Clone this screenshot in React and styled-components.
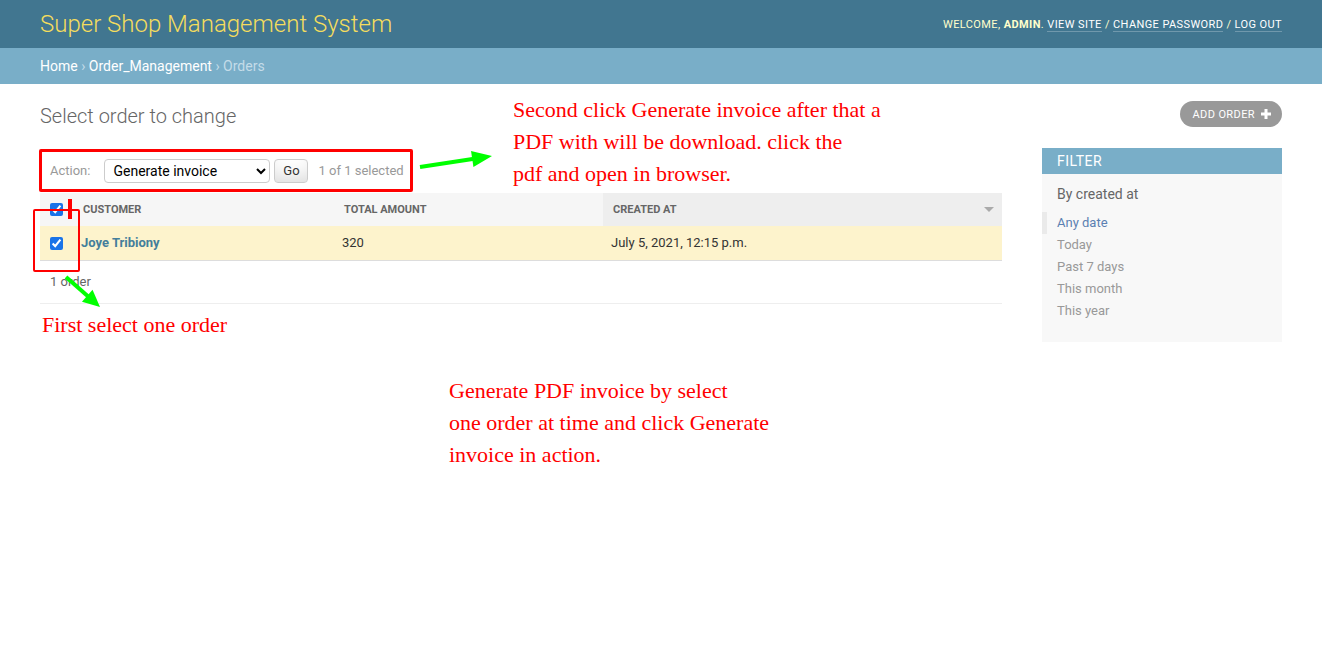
import React from 'react';
import styled, { createGlobalStyle } from 'styled-components';

const GlobalStyle = createGlobalStyle`
	html, body {
		margin: 0;
		padding: 0;
		background: #fff;
	}
	body {
		font-family: Roboto, "Lucida Grande", "DejaVu Sans", Verdana, Arial, sans-serif;
		font-size: 14px;
		color: #333;
	}
	* {
		box-sizing: border-box;
	}
`;

const Page = styled.div`
	position: relative;
	min-height: 669px;
`;

const Header = styled.header`
	display: flex;
	align-items: center;
	justify-content: space-between;
	height: 48px;
	padding: 0 40px;
	background: #417690;
`;

const Branding = styled.h1`
	margin: 0;
	font-size: 24px;
	font-weight: 300;
	line-height: 28px;
	color: #f5dd5d;
`;

const UserTools = styled.div`
	padding-top: 2px;
	font-size: 11px;
	line-height: 16px;
	letter-spacing: 0.4px;
	text-transform: uppercase;
	color: #ffc;

	strong {
		font-weight: 700;
	}
`;

const UserLink = styled.a`
	color: #fff;
	text-decoration: none;
	border-bottom: 1px solid rgba(255, 255, 255, 0.25);
`;

const Breadcrumbs = styled.div`
	padding: 10px 40px;
	background: #79aec8;
	font-size: 14px;
	line-height: 16px;
	color: #c4dce8;

	a {
		color: #fff;
		text-decoration: none;
	}
`;

const Content = styled.main`
	padding: 20px 40px;
`;

const TitleRow = styled.div`
	display: flex;
	justify-content: space-between;
	align-items: flex-start;
	margin-bottom: 20px;
`;

const Title = styled.h1`
	margin: 0;
	font-size: 20px;
	line-height: 24px;
	font-weight: 300;
	color: #666;
`;

const AddButton = styled.a`
	display: inline-flex;
	align-items: center;
	gap: 6px;
	height: 26px;
	margin-top: -3px;
	padding: 0 11px 0 12px;
	border-radius: 15px;
	background: #999;
	color: #fff;
	font-size: 11px;
	letter-spacing: 0.4px;
	text-transform: uppercase;
	text-decoration: none;
`;

const ChangeList = styled.div`
	display: flex;
	align-items: flex-start;
	gap: 40px;
`;

const Results = styled.div`
	flex: 1;
`;

const Actions = styled.div`
	display: flex;
	align-items: center;
	height: 45px;
	padding: 0 10px;
	font-size: 13px;
	color: #999;
`;

const ActionSelect = styled.select`
	width: 166px;
	height: 24px;
	margin-left: 14px;
	padding: 0 0 0 4px;
	border: 1px solid #ccc;
	border-radius: 4px;
	background: #fff;
	color: #000;
	font-family: inherit;
	font-size: 14px;
`;

const GoButton = styled.button`
	width: 34px;
	height: 24px;
	margin-left: 4px;
	padding: 0;
	border: 1px solid #ccc;
	border-radius: 4px;
	background: #fff;
	box-shadow: 0 -15px 20px -10px rgba(0, 0, 0, 0.15) inset;
	color: #333;
	font-family: inherit;
	font-size: 13px;
`;

const Counter = styled.span`
	margin-left: 10px;
`;

const Table = styled.table`
	width: 100%;
	border-collapse: collapse;
	table-layout: fixed;
`;

const HeadCell = styled.th`
	height: 33px;
	padding: 0 10px;
	background: ${(p) => (p.$sorted ? '#eee' : '#f6f6f6')};
	color: #666;
	font-size: 11px;
	font-weight: 700;
	text-align: left;
	text-transform: uppercase;
	white-space: nowrap;
`;

const SortHead = styled.div`
	display: flex;
	align-items: center;
	justify-content: space-between;
`;

const SortArrow = styled.span`
	width: 0;
	height: 0;
	margin-right: -2px;
	border-left: 5px solid transparent;
	border-right: 5px solid transparent;
	border-top: 5px solid #aaa;
`;

const CheckCell = styled.td`
	padding: 0 0 0 10px;
	background: ${(p) => (p.$head ? '#f6f6f6' : 'transparent')};
	vertical-align: middle;
`;

const Check = styled.input`
	display: block;
	width: 13px;
	height: 13px;
	margin: 0;
	accent-color: #1a73e8;
`;

const Row = styled.tr`
	background: #fdf3cc;
`;

const Cell = styled.td`
	height: 34px;
	padding: 0 8px;
	font-size: 13px;
	line-height: 18px;
	color: #333;
	vertical-align: middle;
`;

const RowLink = styled.a`
	color: #447e9b;
	font-weight: 700;
	text-decoration: none;
`;

const Paginator = styled.p`
	margin: 0;
	padding: 10px;
	border-top: 1px solid #ddd;
	border-bottom: 1px solid #eee;
	font-size: 13px;
	line-height: 22px;
	color: #666;
`;

const Filter = styled.aside`
	flex: 0 0 240px;
	background: #f8f8f8;
`;

const FilterTitle = styled.h2`
	margin: 0 0 12px;
	padding: 5px 15px;
	background: #79aec8;
	color: #fff;
	font-size: 14px;
	font-weight: 400;
	line-height: 16px;
	letter-spacing: 0.5px;
	text-transform: uppercase;
`;

const FilterHeading = styled.h3`
	margin: 0 0 10px;
	padding: 0 15px;
	font-size: 14px;
	font-weight: 400;
	line-height: 16px;
	color: #666;
`;

const FilterList = styled.ul`
	margin: 5px 0;
	padding: 0 15px 15px;
	list-style: none;
`;

const FilterItem = styled.li`
	padding: 1px 0 1px ${(p) => (p.$selected ? '10px' : '0')};
	margin-left: ${(p) => (p.$selected ? '-15px' : '0')};
	border-left: ${(p) => (p.$selected ? '5px solid #eaeaea' : 'none')};
	font-size: 13px;
	line-height: 20px;

	a {
		color: ${(p) => (p.$selected ? '#5b80b2' : '#999')};
		text-decoration: none;
	}
`;

/* annotation layer drawn over the screenshot */
const Overlay = styled.div`
	position: absolute;
	inset: 0;
	pointer-events: none;
`;

const RedBox = styled.div`
	position: absolute;
	border: ${(p) => p.$w}px solid #f00;
	border-radius: 2px;
`;

const RedMark = styled.div`
	position: absolute;
	left: 68px;
	top: 199px;
	width: 4px;
	height: 20px;
	background: #f00;
`;

const Note = styled.div`
	position: absolute;
	font-family: "Liberation Serif", "Times New Roman", serif;
	font-size: 22px;
	line-height: 32px;
	color: #f00;
	white-space: nowrap;
`;

const ArrowSvg = styled.svg`
	position: absolute;
	left: 0;
	top: 0;
	overflow: visible;
`;

const Arrow = ({ from, to, head = 18, half = 8 }) => {
	const dx = to[0] - from[0];
	const dy = to[1] - from[1];
	const len = Math.hypot(dx, dy);
	const ux = dx / len;
	const uy = dy / len;
	const bx = to[0] - ux * head;
	const by = to[1] - uy * head;
	const pts = [
		`${to[0]},${to[1]}`,
		`${bx - uy * half},${by + ux * half}`,
		`${bx + uy * half},${by - ux * half}`,
	].join(' ');
	return (
		<g>
			<line x1={from[0]} y1={from[1]} x2={bx + ux * 2} y2={by + uy * 2} stroke="#0f0" strokeWidth="4" />
			<polygon points={pts} fill="#0f0" />
		</g>
	);
};

const filters = ['Any date', 'Today', 'Past 7 days', 'This month', 'This year'];

const App = () => {
	return (
		<Page>
			<GlobalStyle />
			<Header>
				<Branding>Super Shop Management System</Branding>
				<UserTools>
					Welcome, <strong>admin</strong>. <UserLink href="#">View site</UserLink> /{' '}
					<UserLink href="#">Change password</UserLink> / <UserLink href="#">Log out</UserLink>
				</UserTools>
			</Header>
			<Breadcrumbs>
				<a href="#">Home</a> › <a href="#">Order_Management</a> › Orders
			</Breadcrumbs>
			<Content>
				<TitleRow>
					<Title>Select order to change</Title>
					<AddButton href="#">
						Add order
						<svg width="10" height="10" viewBox="0 0 10 10">
							<path d="M5 0v10M0 5h10" stroke="#fff" strokeWidth="3" />
						</svg>
					</AddButton>
				</TitleRow>
				<ChangeList>
					<Results>
						<Actions>
							<label>Action:</label>
							<ActionSelect defaultValue="invoice">
								<option value="">---------</option>
								<option value="invoice">Generate invoice</option>
							</ActionSelect>
							<GoButton>Go</GoButton>
							<Counter>1 of 1 selected</Counter>
						</Actions>
						<Table>
							<colgroup>
								<col style={{ width: 33 }} />
								<col style={{ width: 261 }} />
								<col style={{ width: 269 }} />
								<col />
							</colgroup>
							<thead>
								<tr>
									<CheckCell as="th" $head>
										<Check type="checkbox" checked readOnly />
									</CheckCell>
									<HeadCell>Customer</HeadCell>
									<HeadCell>Total amount</HeadCell>
									<HeadCell $sorted>
										<SortHead>
											Created at
											<SortArrow />
										</SortHead>
									</HeadCell>
								</tr>
							</thead>
							<tbody>
								<Row>
									<CheckCell>
										<Check type="checkbox" checked readOnly />
									</CheckCell>
									<Cell>
										<RowLink href="#">Joye Tribiony</RowLink>
									</Cell>
									<Cell>320</Cell>
									<Cell>July 5, 2021, 12:15 p.m.</Cell>
								</Row>
							</tbody>
						</Table>
						<Paginator>1 order</Paginator>
					</Results>
					<Filter>
						<FilterTitle>Filter</FilterTitle>
						<FilterHeading>By created at</FilterHeading>
						<FilterList>
							{filters.map((f, i) => (
								<FilterItem key={f} $selected={i === 0}>
									<a href="#">{f}</a>
								</FilterItem>
							))}
						</FilterList>
					</Filter>
				</ChangeList>
			</Content>

			<Overlay>
				<RedBox $w={3} style={{ left: 39, top: 149, width: 374, height: 43 }} />
				<RedBox $w={2} style={{ left: 33, top: 209, width: 47, height: 63 }} />
				<RedMark />
				<ArrowSvg width="1322" height="669">
					<Arrow from={[420, 167]} to={[492, 156]} head={20} half={8} />
					<Arrow from={[66, 277]} to={[100, 307]} head={17} half={8} />
				</ArrowSvg>
				<Note style={{ left: 513, top: 94 }}>
					Second click Generate invoice after that a
					<br />
					PDF with will be download. click the
					<br />
					pdf and open in browser.
				</Note>
				<Note style={{ left: 42, top: 309 }}>First select one order</Note>
				<Note style={{ left: 449, top: 375 }}>
					Generate PDF invoice by select
					<br />
					one order at time and click Generate
					<br />
					invoice in action.
				</Note>
			</Overlay>
		</Page>
	);
};

export default App;
